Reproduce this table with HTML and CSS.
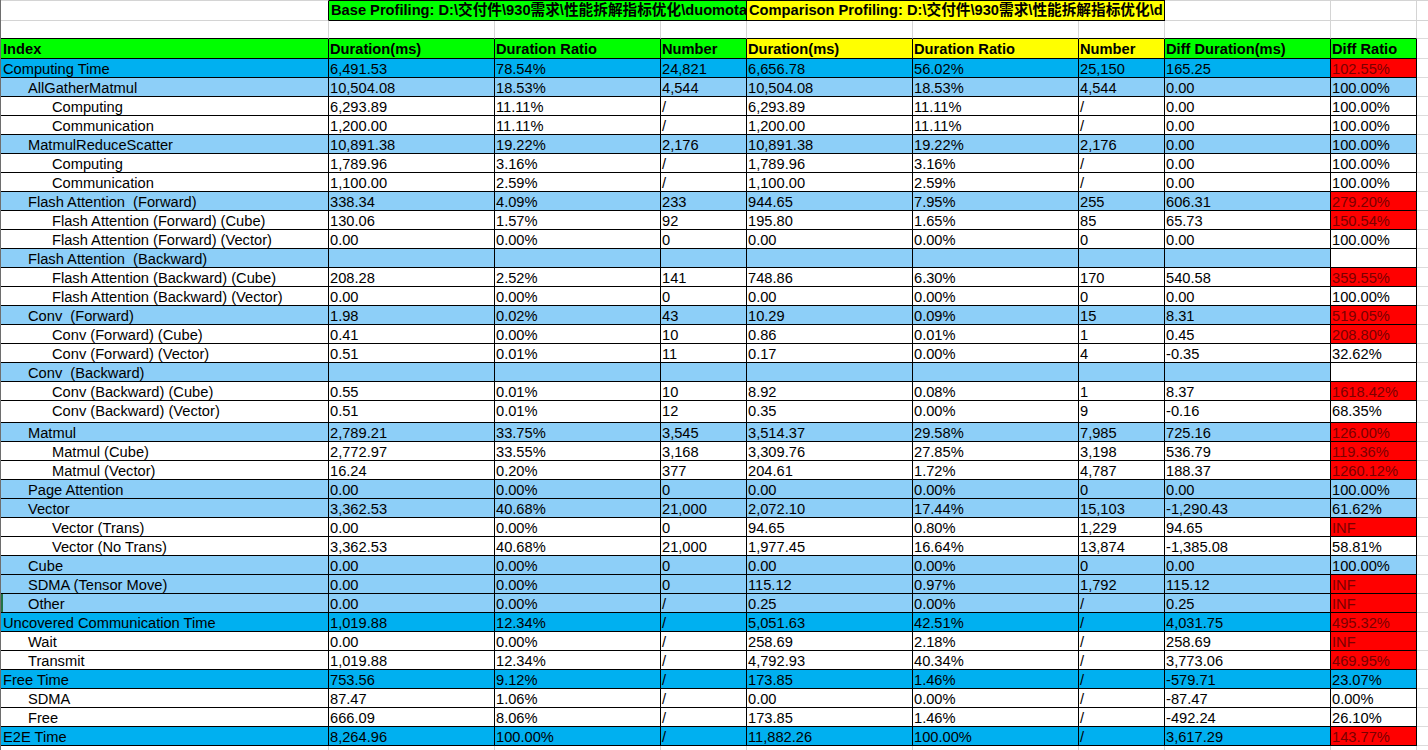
FILE: index.html
```html
<!DOCTYPE html>
<html lang="zh">
<head>
<meta charset="utf-8">
<title>Profiling Comparison</title>
<link rel="stylesheet" href="styles.css">
</head>
<body>
<div class="sheet">
  <div class="row title">
    <div class="c a"></div>
    <div class="c base">Base Profiling: D:\交付件\930需求\性能拆解指标优化\duomota</div>
    <div class="c cmp">Comparison Profiling: D:\交付件\930需求\性能拆解指标优化\d</div>
    <div class="c"></div>
    <div class="c"></div>
    <div class="c pad"></div>
  </div>
  <div class="row blank">
    <div class="c"></div><div class="c"></div><div class="c"></div><div class="c"></div><div class="c"></div><div class="c"></div><div class="c"></div><div class="c"></div><div class="c"></div><div class="c pad"></div>
  </div>
  <div class="row head">
    <div class="c g i0">Index</div>
    <div class="c g">Duration(ms)</div>
    <div class="c g">Duration Ratio</div>
    <div class="c g">Number</div>
    <div class="c y">Duration(ms)</div>
    <div class="c y">Duration Ratio</div>
    <div class="c y">Number</div>
    <div class="c g">Diff Duration(ms)</div>
    <div class="c g">Diff Ratio</div>
    <div class="c pad"></div>
  </div>

  <div class="row l0"><div class="c i0">Computing Time</div><div class="c">6,491.53</div><div class="c">78.54%</div><div class="c">24,821</div><div class="c">6,656.78</div><div class="c">56.02%</div><div class="c">25,150</div><div class="c">165.25</div><div class="c red">102.55%</div><div class="c pad"></div></div>
  <div class="row l1"><div class="c i1">AllGatherMatmul</div><div class="c">10,504.08</div><div class="c">18.53%</div><div class="c">4,544</div><div class="c">10,504.08</div><div class="c">18.53%</div><div class="c">4,544</div><div class="c">0.00</div><div class="c">100.00%</div><div class="c pad"></div></div>
  <div class="row"><div class="c i2">Computing</div><div class="c">6,293.89</div><div class="c">11.11%</div><div class="c">/</div><div class="c">6,293.89</div><div class="c">11.11%</div><div class="c">/</div><div class="c">0.00</div><div class="c">100.00%</div><div class="c pad"></div></div>
  <div class="row"><div class="c i2">Communication</div><div class="c">1,200.00</div><div class="c">11.11%</div><div class="c">/</div><div class="c">1,200.00</div><div class="c">11.11%</div><div class="c">/</div><div class="c">0.00</div><div class="c">100.00%</div><div class="c pad"></div></div>
  <div class="row l1"><div class="c i1">MatmulReduceScatter</div><div class="c">10,891.38</div><div class="c">19.22%</div><div class="c">2,176</div><div class="c">10,891.38</div><div class="c">19.22%</div><div class="c">2,176</div><div class="c">0.00</div><div class="c">100.00%</div><div class="c pad"></div></div>
  <div class="row"><div class="c i2">Computing</div><div class="c">1,789.96</div><div class="c">3.16%</div><div class="c">/</div><div class="c">1,789.96</div><div class="c">3.16%</div><div class="c">/</div><div class="c">0.00</div><div class="c">100.00%</div><div class="c pad"></div></div>
  <div class="row"><div class="c i2">Communication</div><div class="c">1,100.00</div><div class="c">2.59%</div><div class="c">/</div><div class="c">1,100.00</div><div class="c">2.59%</div><div class="c">/</div><div class="c">0.00</div><div class="c">100.00%</div><div class="c pad"></div></div>
  <div class="row l1"><div class="c i1">Flash Attention  (Forward)</div><div class="c">338.34</div><div class="c">4.09%</div><div class="c">233</div><div class="c">944.65</div><div class="c">7.95%</div><div class="c">255</div><div class="c">606.31</div><div class="c red">279.20%</div><div class="c pad"></div></div>
  <div class="row"><div class="c i2">Flash Attention (Forward) (Cube)</div><div class="c">130.06</div><div class="c">1.57%</div><div class="c">92</div><div class="c">195.80</div><div class="c">1.65%</div><div class="c">85</div><div class="c">65.73</div><div class="c red">150.54%</div><div class="c pad"></div></div>
  <div class="row"><div class="c i2">Flash Attention (Forward) (Vector)</div><div class="c">0.00</div><div class="c">0.00%</div><div class="c">0</div><div class="c">0.00</div><div class="c">0.00%</div><div class="c">0</div><div class="c">0.00</div><div class="c">100.00%</div><div class="c pad"></div></div>
  <div class="row l1"><div class="c i1">Flash Attention  (Backward)</div><div class="c"></div><div class="c"></div><div class="c"></div><div class="c"></div><div class="c"></div><div class="c"></div><div class="c"></div><div class="c white"></div><div class="c pad"></div></div>
  <div class="row"><div class="c i2">Flash Attention (Backward) (Cube)</div><div class="c">208.28</div><div class="c">2.52%</div><div class="c">141</div><div class="c">748.86</div><div class="c">6.30%</div><div class="c">170</div><div class="c">540.58</div><div class="c red">359.55%</div><div class="c pad"></div></div>
  <div class="row"><div class="c i2">Flash Attention (Backward) (Vector)</div><div class="c">0.00</div><div class="c">0.00%</div><div class="c">0</div><div class="c">0.00</div><div class="c">0.00%</div><div class="c">0</div><div class="c">0.00</div><div class="c">100.00%</div><div class="c pad"></div></div>
  <div class="row l1"><div class="c i1">Conv  (Forward)</div><div class="c">1.98</div><div class="c">0.02%</div><div class="c">43</div><div class="c">10.29</div><div class="c">0.09%</div><div class="c">15</div><div class="c">8.31</div><div class="c red">519.05%</div><div class="c pad"></div></div>
  <div class="row"><div class="c i2">Conv (Forward) (Cube)</div><div class="c">0.41</div><div class="c">0.00%</div><div class="c">10</div><div class="c">0.86</div><div class="c">0.01%</div><div class="c">1</div><div class="c">0.45</div><div class="c red">208.80%</div><div class="c pad"></div></div>
  <div class="row"><div class="c i2">Conv (Forward) (Vector)</div><div class="c">0.51</div><div class="c">0.01%</div><div class="c">11</div><div class="c">0.17</div><div class="c">0.00%</div><div class="c">4</div><div class="c">-0.35</div><div class="c">32.62%</div><div class="c pad"></div></div>
  <div class="row l1"><div class="c i1">Conv  (Backward)</div><div class="c"></div><div class="c"></div><div class="c"></div><div class="c"></div><div class="c"></div><div class="c"></div><div class="c"></div><div class="c white"></div><div class="c pad"></div></div>
  <div class="row"><div class="c i2">Conv (Backward) (Cube)</div><div class="c">0.55</div><div class="c">0.01%</div><div class="c">10</div><div class="c">8.92</div><div class="c">0.08%</div><div class="c">1</div><div class="c">8.37</div><div class="c red">1618.42%</div><div class="c pad"></div></div>
  <div class="row tall"><div class="c i2">Conv (Backward) (Vector)</div><div class="c">0.51</div><div class="c">0.01%</div><div class="c">12</div><div class="c">0.35</div><div class="c">0.00%</div><div class="c">9</div><div class="c">-0.16</div><div class="c">68.35%</div><div class="c pad"></div></div>
  <div class="row l1"><div class="c i1">Matmul</div><div class="c">2,789.21</div><div class="c">33.75%</div><div class="c">3,545</div><div class="c">3,514.37</div><div class="c">29.58%</div><div class="c">7,985</div><div class="c">725.16</div><div class="c red">126.00%</div><div class="c pad"></div></div>
  <div class="row"><div class="c i2">Matmul (Cube)</div><div class="c">2,772.97</div><div class="c">33.55%</div><div class="c">3,168</div><div class="c">3,309.76</div><div class="c">27.85%</div><div class="c">3,198</div><div class="c">536.79</div><div class="c red">119.36%</div><div class="c pad"></div></div>
  <div class="row"><div class="c i2">Matmul (Vector)</div><div class="c">16.24</div><div class="c">0.20%</div><div class="c">377</div><div class="c">204.61</div><div class="c">1.72%</div><div class="c">4,787</div><div class="c">188.37</div><div class="c red">1260.12%</div><div class="c pad"></div></div>
  <div class="row l1"><div class="c i1">Page Attention</div><div class="c">0.00</div><div class="c">0.00%</div><div class="c">0</div><div class="c">0.00</div><div class="c">0.00%</div><div class="c">0</div><div class="c">0.00</div><div class="c">100.00%</div><div class="c pad"></div></div>
  <div class="row l1"><div class="c i1">Vector</div><div class="c">3,362.53</div><div class="c">40.68%</div><div class="c">21,000</div><div class="c">2,072.10</div><div class="c">17.44%</div><div class="c">15,103</div><div class="c">-1,290.43</div><div class="c">61.62%</div><div class="c pad"></div></div>
  <div class="row"><div class="c i2">Vector (Trans)</div><div class="c">0.00</div><div class="c">0.00%</div><div class="c">0</div><div class="c">94.65</div><div class="c">0.80%</div><div class="c">1,229</div><div class="c">94.65</div><div class="c red">INF</div><div class="c pad"></div></div>
  <div class="row"><div class="c i2">Vector (No Trans)</div><div class="c">3,362.53</div><div class="c">40.68%</div><div class="c">21,000</div><div class="c">1,977.45</div><div class="c">16.64%</div><div class="c">13,874</div><div class="c">-1,385.08</div><div class="c">58.81%</div><div class="c pad"></div></div>
  <div class="row l1"><div class="c i1">Cube</div><div class="c">0.00</div><div class="c">0.00%</div><div class="c">0</div><div class="c">0.00</div><div class="c">0.00%</div><div class="c">0</div><div class="c">0.00</div><div class="c">100.00%</div><div class="c pad"></div></div>
  <div class="row l1"><div class="c i1">SDMA (Tensor Move)</div><div class="c">0.00</div><div class="c">0.00%</div><div class="c">0</div><div class="c">115.12</div><div class="c">0.97%</div><div class="c">1,792</div><div class="c">115.12</div><div class="c red">INF</div><div class="c pad"></div></div>
  <div class="row l1 sel"><div class="c i1">Other</div><div class="c">0.00</div><div class="c">0.00%</div><div class="c">/</div><div class="c">0.25</div><div class="c">0.00%</div><div class="c">/</div><div class="c">0.25</div><div class="c red">INF</div><div class="c pad"></div></div>
  <div class="row l0"><div class="c i0">Uncovered Communication Time</div><div class="c">1,019.88</div><div class="c">12.34%</div><div class="c">/</div><div class="c">5,051.63</div><div class="c">42.51%</div><div class="c">/</div><div class="c">4,031.75</div><div class="c red">495.32%</div><div class="c pad"></div></div>
  <div class="row"><div class="c i1">Wait</div><div class="c">0.00</div><div class="c">0.00%</div><div class="c">/</div><div class="c">258.69</div><div class="c">2.18%</div><div class="c">/</div><div class="c">258.69</div><div class="c red">INF</div><div class="c pad"></div></div>
  <div class="row"><div class="c i1">Transmit</div><div class="c">1,019.88</div><div class="c">12.34%</div><div class="c">/</div><div class="c">4,792.93</div><div class="c">40.34%</div><div class="c">/</div><div class="c">3,773.06</div><div class="c red">469.95%</div><div class="c pad"></div></div>
  <div class="row l0"><div class="c i0">Free Time</div><div class="c">753.56</div><div class="c">9.12%</div><div class="c">/</div><div class="c">173.85</div><div class="c">1.46%</div><div class="c">/</div><div class="c">-579.71</div><div class="c">23.07%</div><div class="c pad"></div></div>
  <div class="row"><div class="c i1">SDMA</div><div class="c">87.47</div><div class="c">1.06%</div><div class="c">/</div><div class="c">0.00</div><div class="c">0.00%</div><div class="c">/</div><div class="c">-87.47</div><div class="c">0.00%</div><div class="c pad"></div></div>
  <div class="row"><div class="c i1">Free</div><div class="c">666.09</div><div class="c">8.06%</div><div class="c">/</div><div class="c">173.85</div><div class="c">1.46%</div><div class="c">/</div><div class="c">-492.24</div><div class="c">26.10%</div><div class="c pad"></div></div>
  <div class="row l0"><div class="c i0">E2E Time</div><div class="c">8,264.96</div><div class="c">100.00%</div><div class="c">/</div><div class="c">11,882.26</div><div class="c">100.00%</div><div class="c">/</div><div class="c">3,617.29</div><div class="c red">143.77%</div><div class="c pad"></div></div>

  <div class="row foot">
    <div class="c"></div><div class="c"></div><div class="c"></div><div class="c"></div><div class="c"></div><div class="c"></div><div class="c"></div><div class="c"></div><div class="c"></div><div class="c pad"></div>
  </div>
</div>
</body>
</html>
```

FILE: styles.css
```css
* {
  box-sizing: border-box;
}

html,
body {
  margin: 0;
  padding: 0;
  background: #ffffff;
}

body {
  font-family: "Liberation Sans", Arial, "Noto Sans CJK SC", sans-serif;
  font-size: 14.67px;
  color: #000000;
  overflow: hidden;
}

.sheet {
  width: 1428px;
  border-left: 1px solid #6e6e6e;
}

.row {
  display: grid;
  grid-template-columns: 328px 166px 166px 86px 166px 166px 86px 166px 86px 1fr;
  height: 19px;
}

.c {
  border-right: 1px solid #000000;
  border-bottom: 1px solid #000000;
  padding-left: 1px;
  line-height: 20px;
  white-space: pre;
  overflow: hidden;
}

.c.i0 { padding-left: 2px; }
.c.i1 { padding-left: 27px; }
.c.i2 { padding-left: 51px; }

.c.pad {
  border-right: none;
  border-bottom: 1px solid #dcdcdc;
}

/* title row */
.row.title { height: 21px; }

.title .c {
  border-top: 1px solid #d4d4d4;
  border-right-color: #d4d4d4;
  border-bottom-color: #d4d4d4;
  line-height: 19px;
}

.title .c.a { border-right-color: #000000; }

.title .c.base,
.title .c.cmp {
  grid-column: span 3;
  font-weight: bold;
  border-color: #000000;
  padding-left: 2px;
}

.title .c.base { background: #00ff00; }
.title .c.cmp { background: #ffff00; }

/* blank row */
.row.blank { height: 18px; }
.blank .c { border-right-color: #d4d4d4; }

/* header row */
.row.head { height: 20px; }
.head .c { font-weight: bold; }
.head .c.g { background: #00ff00; }
.head .c.y { background: #ffff00; }

/* levels */
.l0 .c { background: #00b0f0; }
.l1 .c { background: #8dcff8; }
.l0 .c.pad,
.l1 .c.pad,
.c.white { background: #ffffff; }

.c.red {
  background: #ff0000;
  color: #7a0000;
}

.row.tall { height: 22px; }

.sel .c.i1 { box-shadow: inset 2px 0 0 #217346; }

/* trailing empty grid row */
.row.foot { height: 10px; }
.foot .c {
  border-right-color: #d4d4d4;
  border-bottom: none;
}
.foot .c.pad { border-bottom: none; }
```
